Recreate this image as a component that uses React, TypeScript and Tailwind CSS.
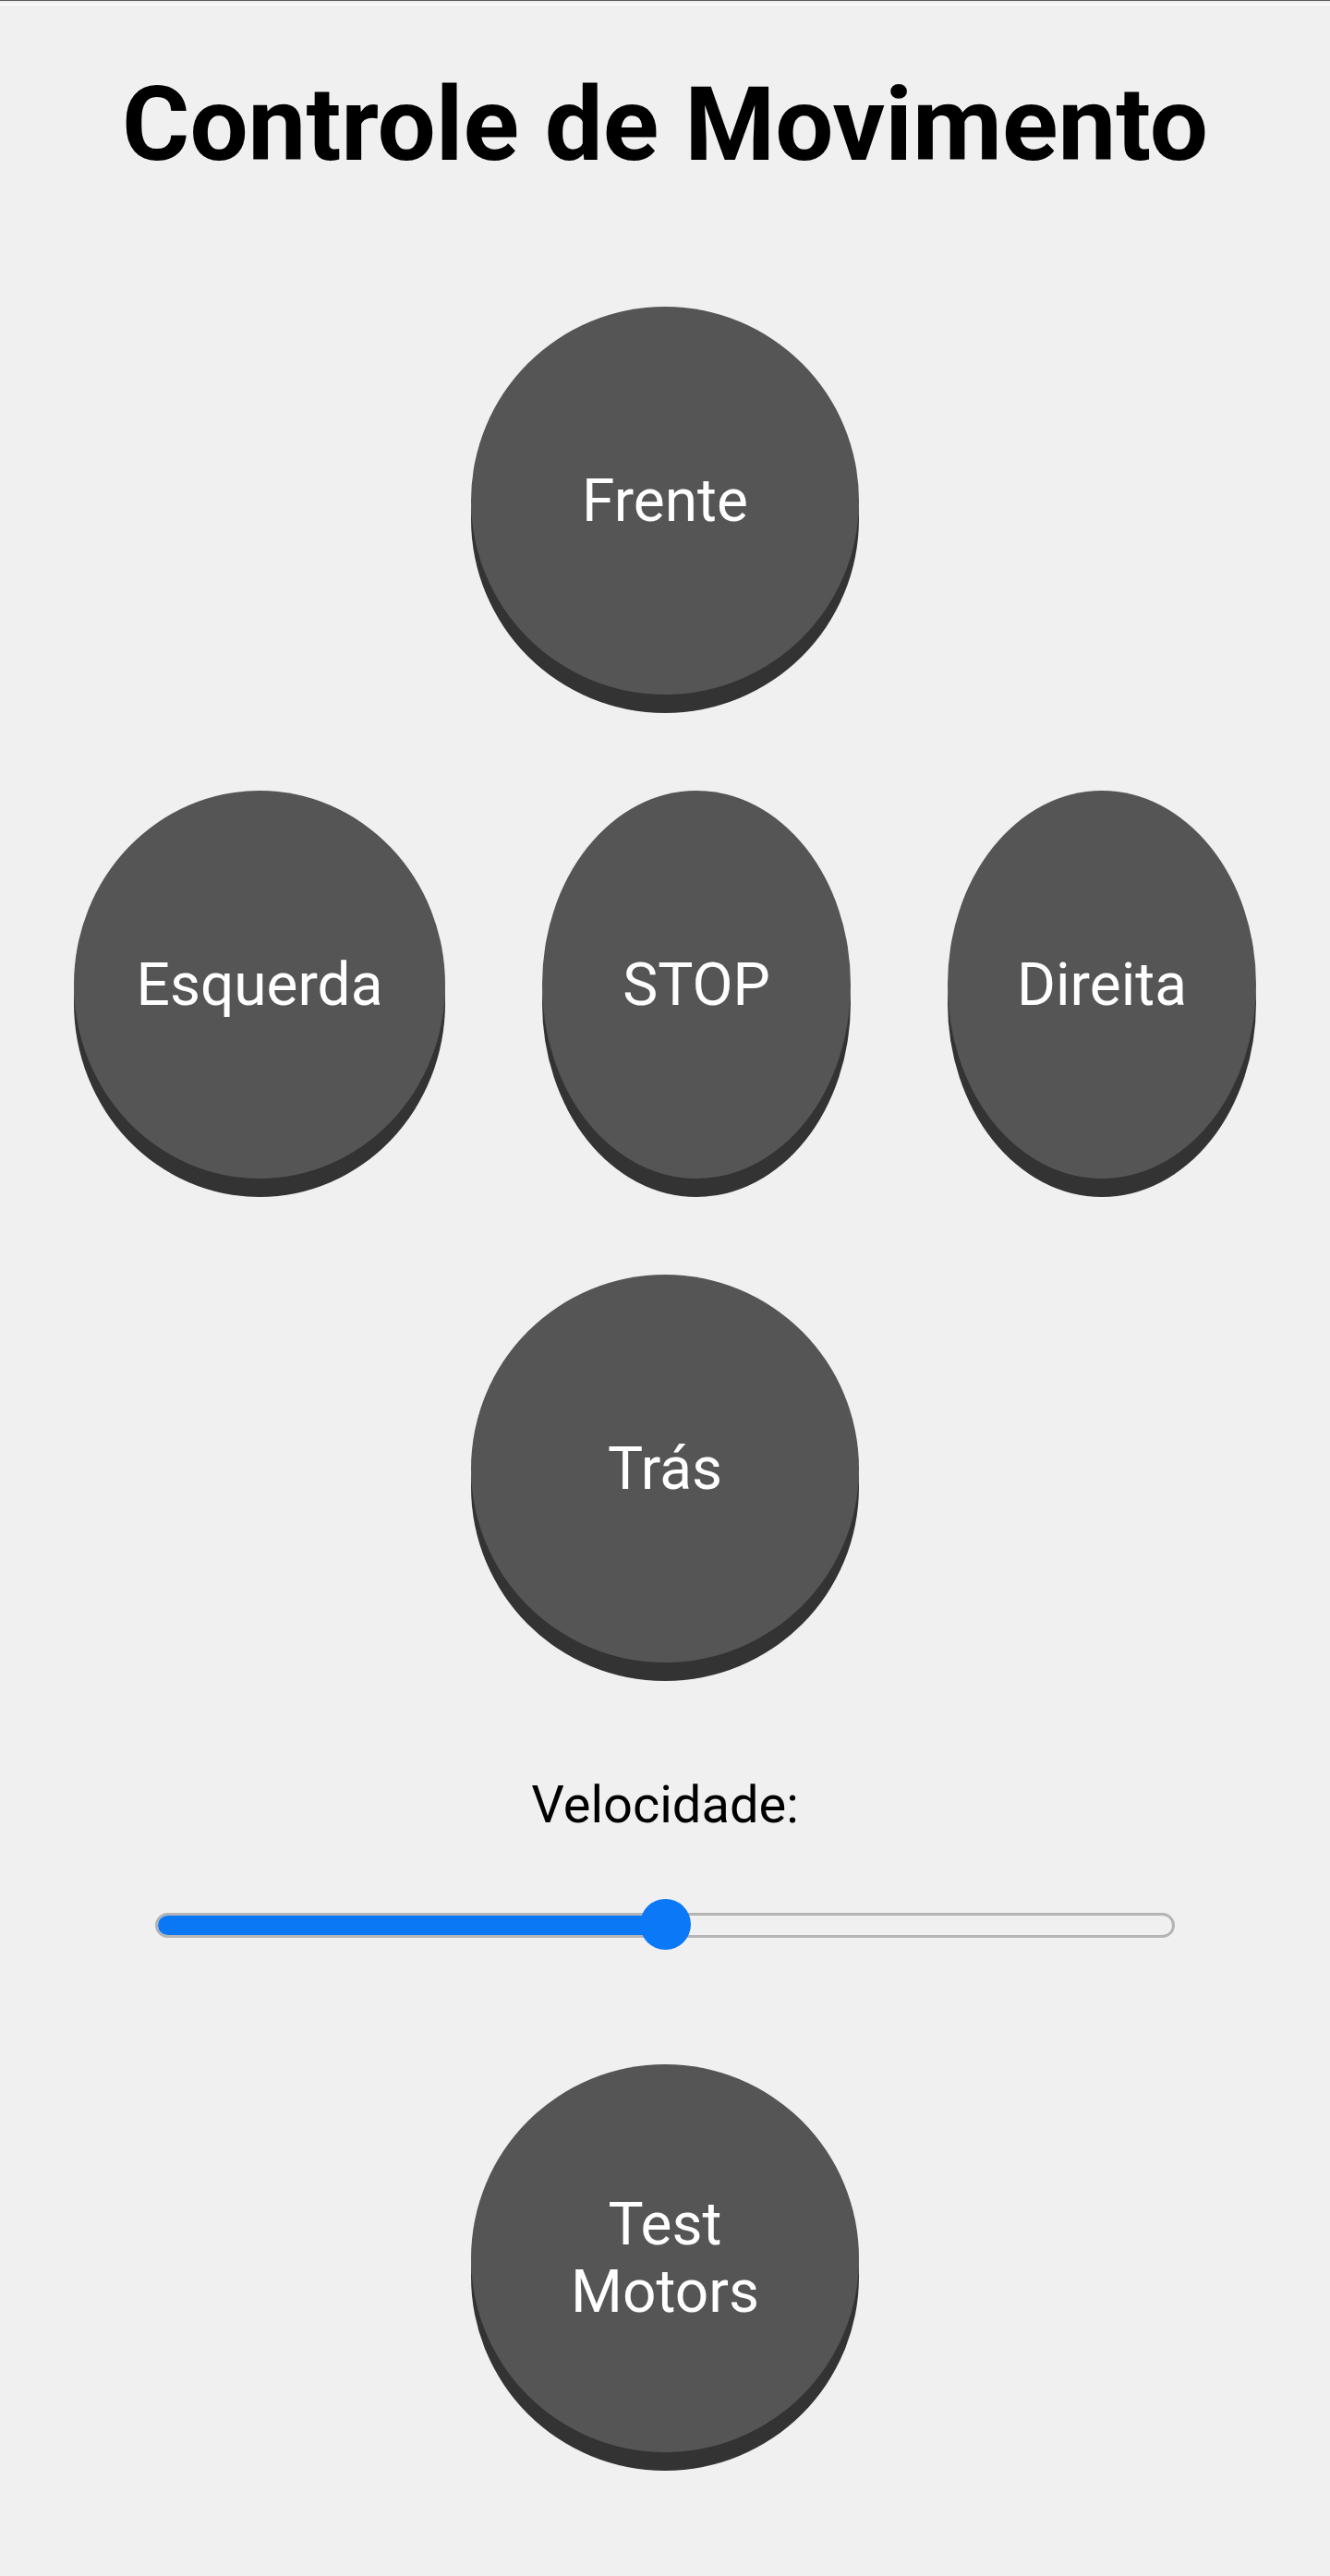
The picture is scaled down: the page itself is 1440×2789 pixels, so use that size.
import React from "react";

const font = { fontFamily: "Roboto, 'Noto Sans', Arial, sans-serif" };

function RoundButton({ label, w = "w-[420px]" }: { label: React.ReactNode; w?: string }) {
  return (
    <button
      className={`${w} h-[420px] rounded-[50%] bg-[#555555] text-white text-[64px] leading-[73px] shadow-[0_20px_0_#333333] flex items-center justify-center text-center`}
      style={font}
    >
      <span>{label}</span>
    </button>
  );
}

export default function App() {
  return (
    <div className="min-h-[2789px] w-full bg-[#f0f0f0] flex flex-col items-center" style={font}>
      <div className="w-full h-[1px] bg-[#5a5a5a]" />
      <div className="w-full h-[3px]" />
      <div className="w-full h-[2px] bg-[#fafafa]" />
      <h1 className="mt-[63px] text-[112px] font-bold leading-[131px] text-black">Controle de Movimento</h1>
      <div className="mt-[132px]">
        <RoundButton label="Frente" />
      </div>
      <div className="mt-[104px] flex justify-center gap-[105px]">
        <RoundButton label="Esquerda" w="w-[402px]" />
        <RoundButton label="STOP" w="w-[334px]" />
        <RoundButton label="Direita" w="w-[334px]" />
      </div>
      <div className="mt-[104px]">
        <RoundButton label="Trás" />
      </div>
      <p className="mt-[121px] text-[56px] leading-[66px] text-black">Velocidade:</p>
      <div className="mt-[69px] relative w-[1104px] h-[56px] flex items-center">
        <div className="w-full h-[27px] rounded-full border-[3px] border-[#b4b4b4] bg-[#f0f0f0] overflow-hidden">
          <div className="h-full w-1/2 bg-[#0a77f5]" />
        </div>
        <div className="absolute left-[525px] top-0 w-[55px] h-[55px] rounded-full bg-[#0a78f7]" />
      </div>
      <div className="mt-[123px]">
        <RoundButton
          label={
            <>
              Test
              <br />
              Motors
            </>
          }
        />
      </div>
    </div>
  );
}
